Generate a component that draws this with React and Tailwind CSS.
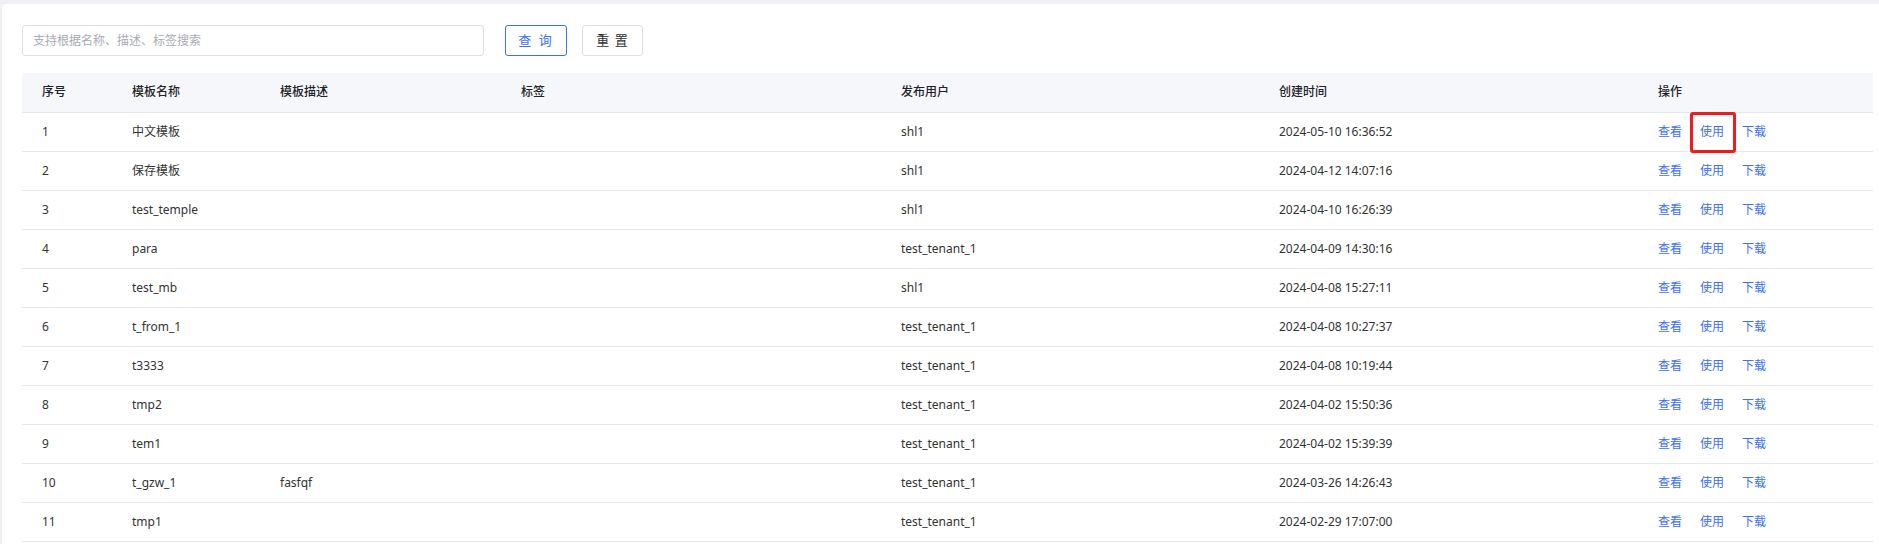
import React from 'react';

const rows = [
    { id: 1, name: '中文模板', desc: '', tag: '', user: 'shl1', time: '2024-05-10 16:36:52' },
    { id: 2, name: '保存模板', desc: '', tag: '', user: 'shl1', time: '2024-04-12 14:07:16' },
    { id: 3, name: 'test_temple', desc: '', tag: '', user: 'shl1', time: '2024-04-10 16:26:39' },
    { id: 4, name: 'para', desc: '', tag: '', user: 'test_tenant_1', time: '2024-04-09 14:30:16' },
    { id: 5, name: 'test_mb', desc: '', tag: '', user: 'shl1', time: '2024-04-08 15:27:11' },
    { id: 6, name: 't_from_1', desc: '', tag: '', user: 'test_tenant_1', time: '2024-04-08 10:27:37' },
    { id: 7, name: 't3333', desc: '', tag: '', user: 'test_tenant_1', time: '2024-04-08 10:19:44' },
    { id: 8, name: 'tmp2', desc: '', tag: '', user: 'test_tenant_1', time: '2024-04-02 15:50:36' },
    { id: 9, name: 'tem1', desc: '', tag: '', user: 'test_tenant_1', time: '2024-04-02 15:39:39' },
    { id: 10, name: 't_gzw_1', desc: 'fasfqf', tag: '', user: 'test_tenant_1', time: '2024-03-26 14:26:43' },
    { id: 11, name: 'tmp1', desc: '', tag: '', user: 'test_tenant_1', time: '2024-02-29 17:07:00' },
];

const columns = [
    { key: 'id', title: '序号', width: 'w-[90px]' },
    { key: 'name', title: '模板名称', width: 'w-[148px]' },
    { key: 'desc', title: '模板描述', width: 'w-[241px]' },
    { key: 'tag', title: '标签', width: 'w-[380px]' },
    { key: 'user', title: '发布用户', width: 'w-[378px]' },
    { key: 'time', title: '创建时间', width: 'w-[379px]' },
    { key: 'ops', title: '操作', width: '' },
];

export default function App() {
    return (
        <div
            className="w-full h-[544px] overflow-hidden bg-[#eef0f3] pt-[4px] pl-[2px]"
            style={{ fontFamily: '"Noto Sans", "Noto Sans CJK SC", sans-serif' }}
        >
            <div className="h-full bg-white rounded-tl-[4px] pl-[20px] pr-[6px] pt-[21px]">
                {/* Search bar */}
                <div className="flex items-center h-[31px]">
                    <div className="w-[462px] h-full border border-[#dcdfe6] rounded-[3px] flex items-center px-[10px]">
                        <span className="text-[12px] text-[#a8abb2]">支持根据名称、描述、标签搜索</span>
                    </div>
                    <button className="ml-[21px] w-[62px] h-full border border-[#3d6ff5] rounded-[3px] text-[13px] text-[#3d6ff5] tracking-[2px]">
                        查 询
                    </button>
                    <button className="ml-[15px] w-[61px] h-full border border-[#dcdfe6] rounded-[3px] text-[13px] text-[#303133] tracking-[1px]">
                        重 置
                    </button>
                </div>

                {/* Table */}
                <table className="mt-[17px] w-full table-fixed border-collapse text-[12px]">
                    <colgroup>
                        {columns.map(c => <col key={c.key} className={c.width} />)}
                    </colgroup>
                    <thead className="bg-[#f5f7fa]">
                        <tr className="h-[39px] border-b border-[#e4e7ed]">
                            {columns.map(c => (
                                <th key={c.key} className="pl-[20px] text-left font-medium text-[#1f2329]">
                                    {c.title}
                                </th>
                            ))}
                        </tr>
                    </thead>
                    <tbody>
                        {rows.map((r, i) => (
                            <tr key={r.id} className="h-[39px] border-b border-[#e4e7ed] text-[#333]">
                                <td className="pl-[20px]">{r.id}</td>
                                <td className="pl-[20px]">{r.name}</td>
                                <td className="pl-[20px]">{r.desc}</td>
                                <td className="pl-[20px]">{r.tag}</td>
                                <td className="pl-[20px]">{r.user}</td>
                                <td className="pl-[20px]">{r.time}</td>
                                <td className="pl-[20px]">
                                    <div className="flex gap-[18px] text-[#3d6ff5]">
                                        <span>查看</span>
                                        <span className="relative">
                                            使用
                                            {i === 0 && (
                                                <span className="absolute left-[-10px] right-[-12px] top-[-11px] bottom-[-12px] border-[3px] border-[#f01c1c] rounded-[3px]"></span>
                                            )}
                                        </span>
                                        <span>下载</span>
                                    </div>
                                </td>
                            </tr>
                        ))}
                    </tbody>
                </table>
            </div>
        </div>
    );
}
